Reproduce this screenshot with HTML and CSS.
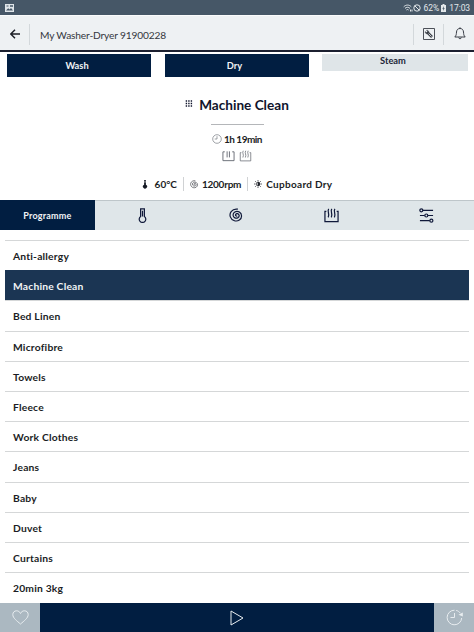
FILE: index.html
```html
<!DOCTYPE html>
<html lang="en">

<head>
    <meta charset="UTF-8">
    <meta name="viewport" content="width=device-width, initial-scale=1.0">
    <title>My Washer-Dryer</title>
    <link rel="stylesheet" href="styles.css">
</head>

<body>
    <!-- icons used more than once -->
    <svg class="sprite">
        <symbol id="spiral" viewBox="0 0 16 16">
            <path d="M8.800 8.400c-.9.800-2.300-.3-1.700-1.500.8-1.600 3.400-1 3.700.9.400 2.300-2.400 3.800-4.500 2.700C3.700 9.200 3.700 5.600 6.200 4.200c3.300-1.800 7.200.7 7.200 4.200 0 3.700-3.800 6.300-7.600 5.200C1.300 12.300-.2 7.200 2.300 3.800 4 1.600 7 .8 9.500 1.300"/>
        </symbol>
        <symbol id="steam" viewBox="0 0 16 16">
            <path d="M2.500 3.500H1v11h14v-11h-1.500M5 1c-2 3 1.500 5-.5 9M8.300 1c-2 3 1.500 5-.5 9M11.600 1c-2 3 1.500 5-.5 9"/>
        </symbol>
    </svg>

    <div class="status">
        <svg class="status__picture" viewBox="0 0 9 8"><path fill="#dfe5e9" d="M0 0h9v8H0z"/><path fill="#465767" d="M1 6.500l2.200-2.300L4.600 5.500 6 4l2 2.500zM1.500 1.500h2v1h-2zM5 1.200h3v1.600H5z"/></svg>
        <div class="status__right">
            <svg class="status__wifi" viewBox="0 0 10 8"><path d="M.7 2.800c2.300-2.300 5.400-2.300 7.600 0M2 4.400c1.500-1.500 3.500-1.500 5 0M3.400 6c.7-.7 1.500-.7 2.200 0M7.500 5.500v2M9 5.500v2"/></svg>
            <svg class="status__block" viewBox="0 0 8 8"><circle cx="4" cy="4" r="3.200"/><path d="M1.800 1.800l4.400 4.400"/></svg>
            <span class="status__percent">62%</span>
            <svg class="status__battery" viewBox="0 0 5 8"><path fill="#e3e8eb" d="M0 1h1.500V0h2v1H5v7H0z"/><path fill="#465767" d="M3 2L1.300 4.800h1L2 7l1.700-3h-1z"/></svg>
            <span class="status__time">17:03</span>
        </div>
    </div>

    <header class="header">
        <svg class="header__back" viewBox="0 0 10 10"><path d="M5 .7L.8 5 5 9.300M.8 5H10"/></svg>
        <h1 class="header__title">My Washer-Dryer 91900228</h1>
        <div class="header__tool">
            <svg viewBox="0 0 12 12"><path d="M.5.5h11v11H.5z" stroke-width=".9"/><path d="M4.500 4.500l4.500 4.500" stroke-width="2.600"/><path d="M3.500 2.200l1 1.300-1 1-1.300-1c-.2 1.500 1 2.700 2.500 2.200l1-1c.5-1.500-.7-2.700-2.200-2.500z" fill="currentColor" stroke-width=".4"/><path d="M5.600 5.600l2.900 2.900" stroke="#eef1f3" stroke-width=".8"/></svg>
        </div>
        <div class="header__bell">
            <svg viewBox="0 0 12 13"><path d="M.8 10h10.400C9.600 8.500 9.700 7 9.500 5 9.300 2.700 8 1.500 6 1.500S2.700 2.700 2.500 5C2.300 7 2.400 8.500.8 10zM4.700 10.500c.2 1.700 2.400 1.700 2.600 0M6 .3v1"/></svg>
        </div>
    </header>

    <div class="modes">
        <button class="mode">Wash</button>
        <button class="mode">Dry</button>
        <button class="mode mode--off">Steam</button>
    </div>

    <section class="summary">
        <h2 class="summary__title">
            <svg class="summary__dots" viewBox="0 0 8 7"><path d="M.7 1h7M.7 3.500h7M.7 6h7"/></svg>
            <span>Machine Clean</span>
        </h2>
        <div class="summary__line"></div>
        <div class="summary__time">
            <svg viewBox="0 0 10 10"><circle cx="5" cy="5" r="4.300"/><path d="M5 2.200V5H2.700"/></svg>
            <span>1h 19min</span>
        </div>
        <div class="summary__phases">
            <svg class="summary__wash" viewBox="0 0 14 12"><path d="M3 1.500H1v9.500h12V1.500h-2M5.500 1v6.500M8 1v6.500"/></svg>
            <svg class="summary__steam"><use href="#steam"/></svg>
        </div>
        <div class="details">
            <div class="detail detail--temp">
                <svg viewBox="0 0 6 10"><path fill="#161a24" d="M2 0h2v5.200a2.300 2.300 0 1 1-2 0z"/><path fill="#fff" d="M2.600.8h.8V3h-.8z"/></svg>
                <span>60°C</span>
            </div>
            <div class="detail detail--spin">
                <svg><use href="#spiral"/></svg>
                <span>1200rpm</span>
            </div>
            <div class="detail detail--dry">
                <svg viewBox="0 0 8 8"><circle cx="4" cy="4" r="1.800"/><path d="M4 0v1.300M4 6.700V8M0 4h1.300M6.700 4H8M1.200 1.200l.9.9M5.900 5.900l.9.900M1.200 6.800l.9-.9M5.900 2.100l.9-.9"/><path fill="#262a35" d="M4 2.200a1.800 1.800 0 0 1 0 3.600z"/></svg>
                <span>Cupboard Dry</span>
            </div>
        </div>
    </section>

    <nav class="tabs">
        <div class="tab tab--active">Programme</div>
        <div class="tab">
            <svg class="tab__temp" viewBox="0 0 10 16"><path d="M3 9V1h4v8a3.500 3.500 0 1 1-4 0zM5 3v6"/></svg>
        </div>
        <div class="tab"><svg class="tab__spin"><use href="#spiral"/></svg></div>
        <div class="tab"><svg class="tab__steam"><use href="#steam"/></svg></div>
        <div class="tab">
            <svg class="tab__options" viewBox="0 0 16 16"><path d="M4 2.500h11M1 8h5M9.500 8H15M1 13.500h10.500"/><circle cx="2.500" cy="2.500" r="1.600"/><circle cx="7.800" cy="8" r="1.600"/><circle cx="13.200" cy="13.500" r="1.600"/></svg>
        </div>
    </nav>

    <ul class="programmes">
        <li>Anti-allergy</li>
        <li class="selected">Machine Clean</li>
        <li>Bed Linen</li>
        <li>Microfibre</li>
        <li>Towels</li>
        <li>Fleece</li>
        <li>Work Clothes</li>
        <li>Jeans</li>
        <li>Baby</li>
        <li>Duvet</li>
        <li>Curtains</li>
        <li>20min 3kg</li>
    </ul>

    <footer class="footer">
        <div class="footer__side">
            <svg class="footer__heart" viewBox="0 0 17 15"><path d="M8.500 14C5 11 .8 8 .8 4.600.8 2.300 2.400.8 4.500.8c1.800 0 3.200 1 4 2.700.8-1.700 2.200-2.700 4-2.700 2.100 0 3.700 1.500 3.700 3.800C16.200 8 12 11 8.500 14z"/></svg>
        </div>
        <div class="footer__start">
            <svg viewBox="0 0 14 16"><path d="M1 1v14l12-7z"/></svg>
        </div>
        <div class="footer__side">
            <svg class="footer__delay" viewBox="0 0 17 17"><path d="M15.700 9A7.300 7.300 0 1 1 8.500 1.200M10.200 1.400c1.600.4 3 1.300 4 2.700M8.500 4v4.500H4.500"/><path fill="#e8edf0" stroke="none" d="M12.500 5.800l4.300-2.300V7.500z"/></svg>
        </div>
    </footer>
</body>

</html>
```
FILE: styles.css
```css
* {
    box-sizing: border-box;
}

body {
    margin: 0;
    height: 632px;
    display: flex;
    flex-direction: column;
    overflow: hidden;
    background: #fff;
    color: #1b1d25;
    font-family: Lato, "Open Sans", sans-serif;
    font-weight: 700;
}

svg {
    display: block;
    flex: none;
    fill: none;
    stroke: currentColor;
}

.sprite {
    display: none;
}

/* status bar */
.status {
    display: flex;
    flex: none;
    justify-content: space-between;
    align-items: center;
    height: 15px;
    padding: 0 5px;
    background: #465767;
    color: #e3e8eb;
    font: 400 8.5px/16px Roboto, sans-serif;
}

.status svg {
    height: 8px;
}

.status__picture {
    width: 9px;
    stroke: none;
}

.status__right {
    display: flex;
    align-items: center;
}

.status__wifi {
    width: 10px;
}

.status__block {
    width: 8px;
}

.status__percent {
    margin: 0 2px 0 3px;
}

.status__battery {
    width: 5px;
    stroke: none;
}

.status__time {
    margin-left: 3px;
    margin-right: -1px;
    letter-spacing: -.1px;
}

/* header */
.header {
    display: flex;
    flex: none;
    align-items: center;
    height: 37px;
    padding: 2px 0 0 10px;
    background: #eef1f3;
    border-top: 1px solid #fafbfb;
    border-bottom: 2px solid #1c2030;
}

.header__back {
    width: 10px;
    height: 10px;
    stroke-width: 1.4;
}

.header__title {
    flex: 1;
    height: 21px;
    margin: 0 0 0 9px;
    padding-left: 10px;
    border-left: 1px solid #d3d8db;
    color: #34373d;
    font-size: 10.2px;
    font-weight: 400;
    line-height: 22px;
    letter-spacing: -.16px;
}

.header__tool,
.header__bell {
    display: flex;
    justify-content: center;
    align-items: center;
    width: 30px;
    height: 21px;
    border-left: 1px solid #d3d8db;
    color: #3a3e47;
}

.header__bell {
    width: 31px;
    padding: 0 0 2px 2px;
}

.header__tool svg {
    width: 12px;
    height: 12px;
}

.header__bell svg {
    width: 12px;
    height: 13px;
}

/* wash / dry / steam */
.modes {
    display: grid;
    flex: none;
    grid-template-columns: 144px 144px 146px;
    justify-content: space-between;
    align-items: start;
    height: 25px;
    padding: 2px 6px 0 7px;
}

.mode {
    height: 23px;
    padding: 0 4px 1px 0;
    border: 0;
    background: #011e41;
    color: #f0f3f5;
    font: inherit;
    font-size: 9.3px;
}

.mode--off {
    height: 17px;
    padding: 0 4px 4px 0;
    background: #dfe5e8;
    color: #1c2638;
}

/* selected programme */
.summary {
    display: flex;
    flex: none;
    flex-direction: column;
    align-items: center;
    height: 123px;
}

.summary__title {
    display: flex;
    height: 28px;
    margin: 19px 0 0 0;
    color: #10142c;
    font-size: 13.600px;
    line-height: 18px;
}

.summary__dots {
    width: 8px;
    height: 7px;
    margin: 4px 6px 0 0;
    stroke-width: 1.3;
    stroke-dasharray: 1.400 1.100;
}

.summary__line {
    width: 53px;
    height: 1px;
    background: #b4b6b9;
}

.summary__time {
    display: flex;
    align-items: center;
    gap: 2px;
    height: 13px;
    margin-top: 7px;
    font-size: 10px;
    letter-spacing: -.5px;
}

.summary__time svg {
    width: 10px;
    height: 10px;
    color: #777b82;
    stroke-width: .7;
}

.summary__phases {
    display: flex;
    gap: 4px;
    margin-top: 5px;
    height: 12px;
    color: #666a72;
}

.summary__wash,
.summary__steam {
    width: 13px;
    height: 12px;
}

.details {
    display: flex;
    margin-top: 15px;
    height: 14px;
    font-size: 10px;
    line-height: 14px;
}

.detail {
    display: flex;
    align-items: center;
}

.detail + .detail {
    padding-left: 6px;
    margin-left: 6px;
    border-left: 1px solid #d0d2d4;
}

.detail--temp svg {
    width: 6px;
    height: 9px;
    margin-right: 7px;
    stroke: none;
}

.detail--spin {
    letter-spacing: -.25px;
}

.detail--dry {
    letter-spacing: .3px;
}

.detail--spin svg {
    width: 9px;
    height: 9px;
    margin-right: 3px;
}

.detail--dry svg {
    width: 8px;
    height: 8px;
    margin-right: 4px;
    stroke-width: .7;
}

/* tabs */
.tabs {
    display: grid;
    flex: none;
    grid-template-columns: repeat(5, 1fr);
    height: 30px;
    background: #dfe6e9;
}

.tab {
    display: flex;
    justify-content: center;
    align-items: center;
    border-top: 1px solid #bec6ca;
    color: #10193a;
    font-size: 9px;
    letter-spacing: .2px;
}

.tab--active {
    border-color: #011e41;
    background: #011e41;
    color: #f0f3f5;
}

.tab svg {
    width: 15px;
    height: 15px;
    stroke-width: 1.3;
}

/* programme list */
.programmes {
    flex: none;
    height: 373px;
    margin: 0;
    padding: 10px 5px 0;
    list-style: none;
    font-size: 10.3px;
    letter-spacing: .2px;
}

.programmes li {
    height: 30.2px;
    padding-left: 8px;
    border-top: 1px solid #d5d7d8;
    line-height: 30px;
}

.programmes .selected {
    border-color: #1b3553;
    background: #1b3553;
    color: #f0f3f5;
}

/* bottom bar */
.footer {
    display: grid;
    flex: none;
    grid-template-columns: 40px 1fr 40px;
    height: 29px;
}

.footer__side,
.footer__start {
    display: flex;
    justify-content: center;
    align-items: center;
    background: #abb8c1;
    color: #e8edf0;
}

.footer__start {
    background: #011e41;
}

.footer__start svg {
    width: 14px;
    height: 16px;
}

.footer__heart {
    width: 17px;
    height: 15px;
}

.footer__delay {
    width: 17px;
    height: 17px;
}
```
